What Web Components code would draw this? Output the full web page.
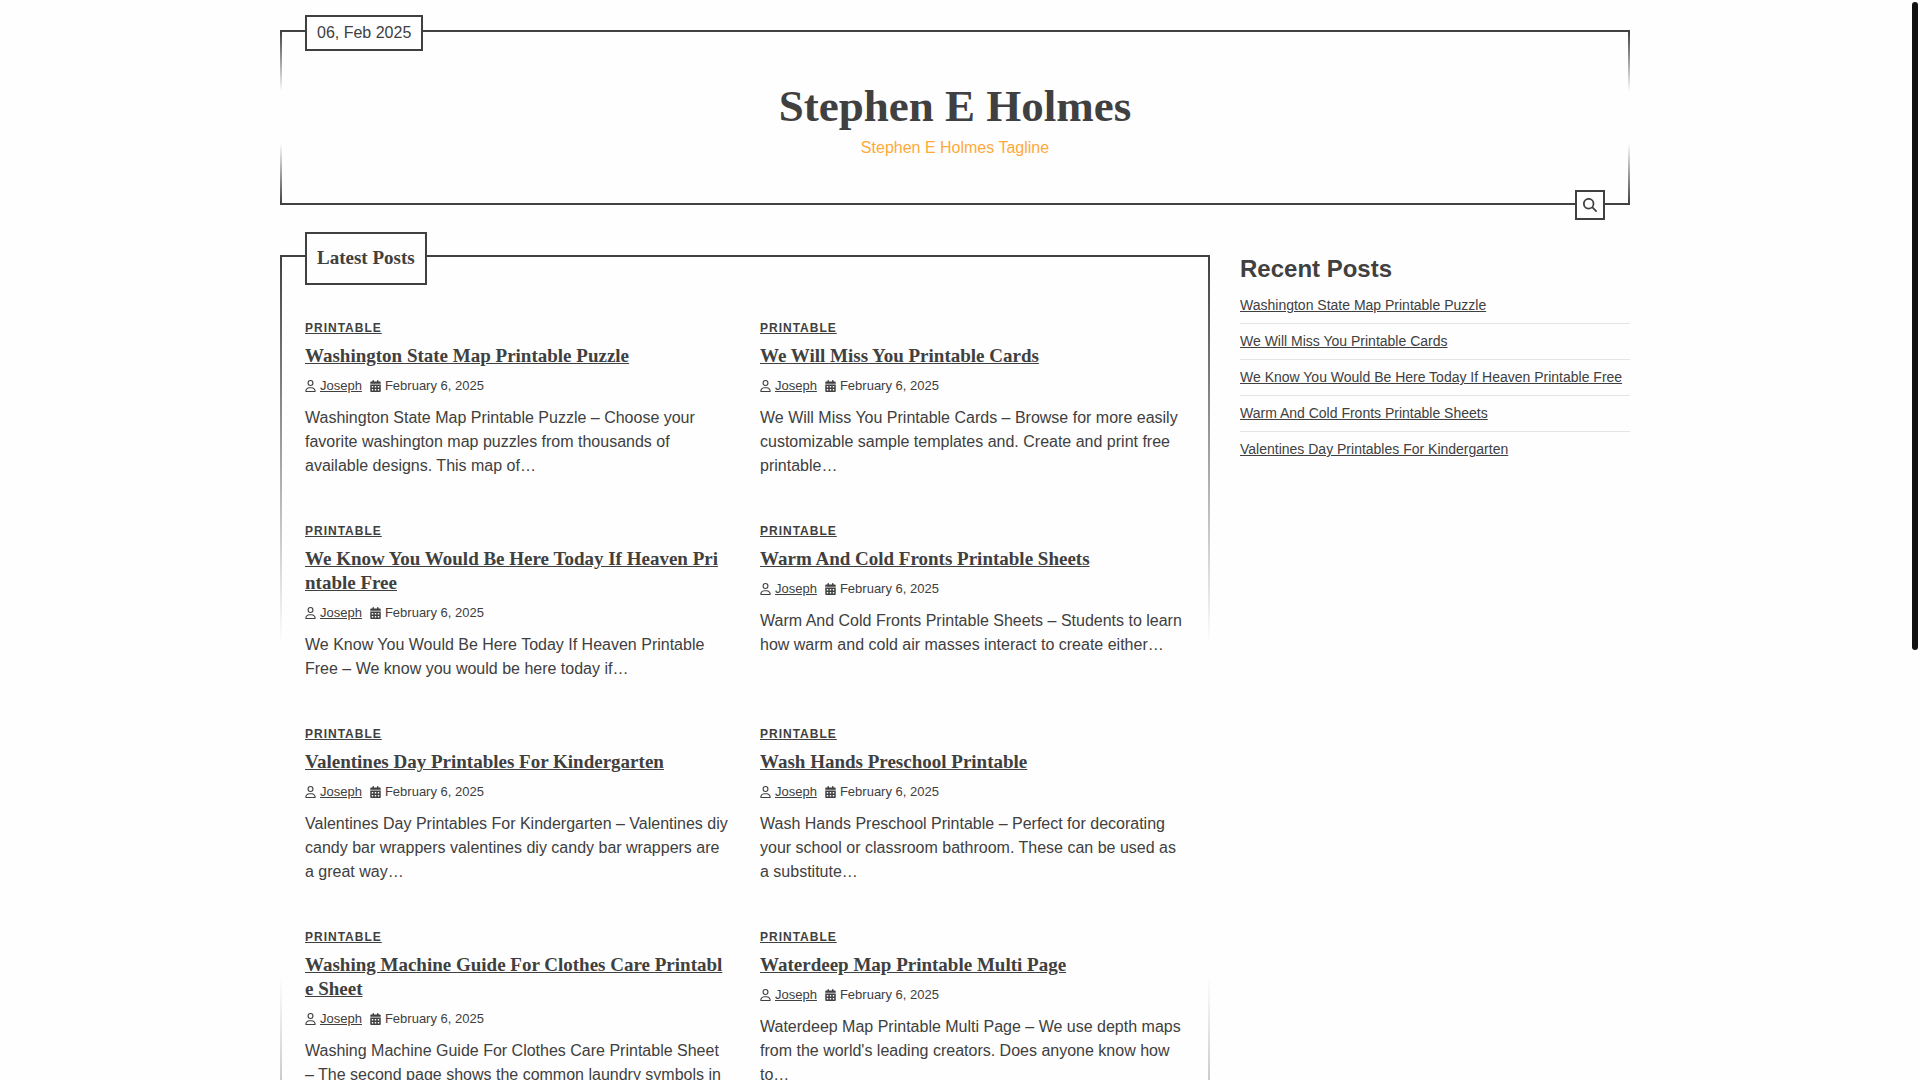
<!DOCTYPE html>
<html lang="en">
<head>
<meta charset="utf-8">
<meta name="viewport" content="width=device-width, initial-scale=1">
<title>Stephen E Holmes</title>
<style>
	:root {
		--ink: #404040;
		--accent: #ffa93a;
		--paper: #fefefe;
		--rule: #e4e4e4;
		--serif: "Liberation Serif", "Times New Roman", serif;
		--sans: "Liberation Sans", Arial, sans-serif;
	}
	body {
		margin: 0;
		background: var(--paper);
		color: var(--ink);
		font: 16px/24px var(--sans);
	}
</style>
</head>
<body>

<page-shell>
	<site-header date="06, Feb 2025" name="Stephen E Holmes" tagline="Stephen E Holmes Tagline"></site-header>
	<page-columns>
		<post-list heading="Latest Posts">
			<post-card name="Washington State Map Printable Puzzle">Washington State Map Printable Puzzle – Choose your favorite washington map puzzles from thousands of available designs. This map of…</post-card>
			<post-card name="We Will Miss You Printable Cards">We Will Miss You Printable Cards – Browse for more easily customizable sample templates and. Create and print free printable…</post-card>
			<post-card name="We Know You Would Be Here Today If Heaven Printable Free">We Know You Would Be Here Today If Heaven Printable Free – We know you would be here today if…</post-card>
			<post-card name="Warm And Cold Fronts Printable Sheets">Warm And Cold Fronts Printable Sheets – Students to learn how warm and cold air masses interact to create either…</post-card>
			<post-card name="Valentines Day Printables For Kindergarten">Valentines Day Printables For Kindergarten – Valentines diy candy bar wrappers valentines diy candy bar wrappers are a great way…</post-card>
			<post-card name="Wash Hands Preschool Printable">Wash Hands Preschool Printable – Perfect for decorating your school or classroom bathroom. These can be used as a substitute…</post-card>
			<post-card name="Washing Machine Guide For Clothes Care Printable Sheet">Washing Machine Guide For Clothes Care Printable Sheet – The second page shows the common laundry symbols in</post-card>
			<post-card name="Waterdeep Map Printable Multi Page">Waterdeep Map Printable Multi Page – We use depth maps from the world's leading creators. Does anyone know how to…</post-card>
		</post-list>
		<recent-posts slot="side" heading="Recent Posts">
			<recent-link>Washington State Map Printable Puzzle</recent-link>
			<recent-link>We Will Miss You Printable Cards</recent-link>
			<recent-link>We Know You Would Be Here Today If Heaven Printable Free</recent-link>
			<recent-link>Warm And Cold Fronts Printable Sheets</recent-link>
			<recent-link>Valentines Day Printables For Kindergarten</recent-link>
		</recent-posts>
	</page-columns>
</page-shell>

<template id="page-shell">
	<style>
		:host {
			display: grid;
			grid-template-columns: minmax(0, 1fr) 10px;
			height: 100vh;
		}
		.content {
			overflow-y: auto;
			scrollbar-width: none;
		}
		.inner {
			max-width: 1350px;
			margin: 0 auto;
			padding: 30px 0;
		}
		.rail {
			padding: 2px;
		}
		.thumb {
			height: 60vh;
			border-radius: 3px;
			background: #111;
		}
	</style>
	<div class="content"><div class="inner"><slot></slot></div></div>
	<div class="rail" aria-hidden="true"><div class="thumb"></div></div>
</template>

<template id="site-header">
	<style>
		:host {
			display: block;
		}
		header {
			position: relative;
			padding: 47px 23px 43px;
			text-align: center;
			border: 2px solid var(--ink);
			border-image: linear-gradient(var(--ink), transparent 35%, transparent 65%, var(--ink)) 1;
		}
		.date, button {
			position: absolute;
			box-sizing: border-box;
			border: 2px solid var(--ink);
			background: var(--paper);
		}
		.date {
			top: -17px;
			left: 23px;
			padding: 4px 10px;
		}
		button {
			right: 23px;
			bottom: -17px;
			display: grid;
			place-items: center;
			width: 30px;
			height: 30px;
			padding: 0;
			color: inherit;
		}
		svg {
			width: 14px;
			height: 14px;
			fill: currentColor;
		}
		h1 {
			margin: 0;
			font: bold 45px/54px var(--serif);
		}
		p {
			margin: 3px 0 0;
			color: var(--accent);
		}
	</style>
	<header>
		<div class="date"></div>
		<h1></h1>
		<p></p>
		<button type="button" aria-label="Search">
			<svg viewBox="0 0 512 512"><path d="M416 208c0 45.9-14.9 88.3-40 122.7L502.6 457.4c12.5 12.5 12.5 32.8 0 45.3s-32.8 12.5-45.3 0L330.7 376c-34.4 25.2-76.8 40-122.7 40C93.1 416 0 322.9 0 208S93.1 0 208 0S416 93.1 416 208zM208 352a144 144 0 1 0 0-288 144 144 0 1 0 0 288z"/></svg>
		</button>
	</header>
</template>

<template id="page-columns">
	<style>
		:host {
			display: grid;
			grid-template-columns: minmax(0, 1fr) 390px;
			gap: 30px;
			margin-top: 50px;
		}
	</style>
	<main><slot></slot></main>
	<aside><slot name="side"></slot></aside>
</template>

<template id="post-list">
	<style>
		:host {
			display: block;
		}
		section {
			position: relative;
			box-sizing: border-box;
			min-height: 1110px;
			padding: 62px 23px 28px;
			border: 2px solid var(--ink);
			border-image: linear-gradient(var(--ink), transparent 35%, transparent 65%, var(--ink)) 1;
		}
		h2 {
			position: absolute;
			top: -25px;
			left: 23px;
			margin: 0;
			padding: 12px 10px 13px;
			border: 2px solid var(--ink);
			background: var(--paper);
			font: bold 19px/24px var(--serif);
		}
		.grid {
			display: grid;
			grid-template-columns: repeat(2, minmax(0, 1fr));
			gap: 44px 30px;
		}
	</style>
	<section>
		<h2></h2>
		<div class="grid"><slot></slot></div>
	</section>
</template>

<template id="post-card">
	<style>
		:host {
			display: block;
		}
		a {
			color: inherit;
		}
		.category {
			display: block;
			font-size: 12px;
			line-height: 18px;
			font-weight: bold;
			letter-spacing: 1px;
			text-transform: uppercase;
		}
		h3 {
			margin: 7px 0 8px;
			padding-right: 4px;
			font: bold 19px/24px var(--serif);
			word-break: break-all;
		}
		.meta {
			display: flex;
			gap: 8px;
			font-size: 13px;
			line-height: 20px;
		}
		.meta span {
			display: flex;
			align-items: center;
			gap: 4px;
		}
		svg {
			width: 11px;
			height: 12px;
			fill: currentColor;
		}
		p {
			margin: 10px 0 0;
		}
	</style>
	<article>
		<a class="category" href="#">Printable</a>
		<h3><a href="#"></a></h3>
		<div class="meta">
			<span>
				<svg viewBox="0 0 448 512"><path d="M304 128a80 80 0 1 0 -160 0 80 80 0 1 0 160 0zM96 128a128 128 0 1 1 256 0A128 128 0 1 1 96 128zM49.3 464H398.7c-8.9-63.3-63.3-112-129-112H178.3c-65.7 0-120.1 48.7-129 112zM0 482.3C0 383.8 79.8 304 178.3 304h91.4C368.2 304 448 383.8 448 482.3c0 16.4-13.3 29.7-29.7 29.7H29.7C13.3 512 0 498.7 0 482.3z"/></svg>
				<a href="#">Joseph</a>
			</span>
			<span>
				<svg viewBox="0 0 448 512"><path d="M128 0c17.7 0 32 14.3 32 32V64H288V32c0-17.7 14.3-32 32-32s32 14.3 32 32V64h48c26.5 0 48 21.5 48 48v48H0V112C0 85.5 21.5 64 48 64H96V32c0-17.7 14.3-32 32-32zM0 192H448V464c0 26.5-21.5 48-48 48H48c-26.5 0-48-21.5-48-48V192zm64 80v32c0 8.8 7.2 16 16 16h32c8.8 0 16-7.2 16-16V272c0-8.8-7.2-16-16-16H80c-8.8 0-16 7.2-16 16zm128 0v32c0 8.8 7.2 16 16 16h32c8.8 0 16-7.2 16-16V272c0-8.8-7.2-16-16-16H208c-8.8 0-16 7.2-16 16zm144-16c-8.8 0-16 7.2-16 16v32c0 8.8 7.2 16 16 16h32c8.8 0 16-7.2 16-16V272c0-8.8-7.2-16-16-16H336zM64 400v32c0 8.8 7.2 16 16 16h32c8.8 0 16-7.2 16-16V400c0-8.8-7.2-16-16-16H80c-8.8 0-16 7.2-16 16zm144-16c-8.8 0-16 7.2-16 16v32c0 8.8 7.2 16 16 16h32c8.8 0 16-7.2 16-16V400c0-8.8-7.2-16-16-16H208zm112 16v32c0 8.8 7.2 16 16 16h32c8.8 0 16-7.2 16-16V400c0-8.8-7.2-16-16-16H336c-8.8 0-16 7.2-16 16z"/></svg>
				<time datetime="2025-02-06">February 6, 2025</time>
			</span>
		</div>
		<p><slot></slot></p>
	</article>
</template>

<template id="recent-posts">
	<style>
		:host {
			display: block;
		}
		h2 {
			margin: 0 0 5px;
			font-size: 24px;
			line-height: 28px;
		}
	</style>
	<h2></h2>
	<nav><slot></slot></nav>
</template>

<template id="recent-link">
	<style>
		:host {
			display: block;
			padding: 6px 0 7px;
			border-bottom: 1px solid var(--rule);
			font-size: 14px;
			line-height: 22px;
		}
		:host(:last-child) {
			border-bottom: 0;
		}
		a {
			color: inherit;
		}
	</style>
	<a href="#"><slot></slot></a>
</template>

<script>
class BaseElement extends HTMLElement {
	constructor() {
		super();

		this.attachShadow({ mode: "open" });
		let template = document.getElementById(this.localName);
		this.shadowRoot.appendChild(template.content.cloneNode(true));
	}

	// copy an attribute's value into an element of the shadow root
	fill(selector, attrName) {
		this.shadowRoot.querySelector(selector).textContent = this.getAttribute(attrName) || "";
	}
}

class PageShell extends BaseElement {}
class PageColumns extends BaseElement {}
class RecentLink extends BaseElement {}

class SiteHeader extends BaseElement {
	connectedCallback() {
		this.fill(".date", "date");
		this.fill("h1", "name");
		this.fill("p", "tagline");
	}
}

class PostList extends BaseElement {
	connectedCallback() {
		this.fill("h2", "heading");
	}
}

class PostCard extends BaseElement {
	connectedCallback() {
		this.fill("h3 a", "name");
	}
}

class RecentPosts extends BaseElement {
	connectedCallback() {
		this.fill("h2", "heading");
	}
}

customElements.define("page-shell", PageShell);
customElements.define("site-header", SiteHeader);
customElements.define("page-columns", PageColumns);
customElements.define("post-list", PostList);
customElements.define("post-card", PostCard);
customElements.define("recent-posts", RecentPosts);
customElements.define("recent-link", RecentLink);
</script>
</body>
</html>
